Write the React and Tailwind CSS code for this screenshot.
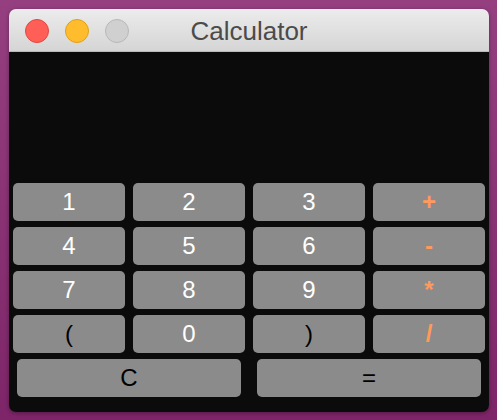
export default function App() {
  const rows = [
    [["1", "w"], ["2", "w"], ["3", "w"], ["+", "o"]],
    [["4", "w"], ["5", "w"], ["6", "w"], ["-", "o"]],
    [["7", "w"], ["8", "w"], ["9", "w"], ["*", "o"]],
    [["(", "b"], ["0", "w"], [")", "b"], ["/", "o"]],
  ];
  const color = { w: "text-white", o: "text-[#ff9a5c] font-semibold text-[23px]", b: "text-black" };
  return (
    <div
      className="w-[497px] h-[420px] bg-gradient-to-b from-[#953f81] to-[#7d2568] pt-[9px] pl-[9px]"
      style={{ fontFamily: '"Liberation Sans", Arial, sans-serif' }}
    >
      <div className="w-[480px] h-[403px] rounded-[7px] overflow-hidden flex flex-col shadow-[0_1px_4px_rgba(0,0,0,0.35)]">
        <div className="h-[43px] shrink-0 bg-gradient-to-b from-[#ececec] to-[#d5d5d5] border-b border-[#b9b9b9] flex items-center relative">
          <div className="flex items-center gap-[16px] pl-[16px] pt-[2px]">
            <div className="w-[24px] h-[24px] rounded-full bg-[#ff5f57] border border-[#e2463f]" />
            <div className="w-[24px] h-[24px] rounded-full bg-[#ffbd2e] border border-[#e1a116]" />
            <div className="w-[24px] h-[24px] rounded-full bg-[#d0d0d0] border border-[#b8b8b8]" />
          </div>
          <div className="absolute inset-0 flex items-center justify-center text-[26px] text-[#4b4b4b] pt-[2px]">
            Calculator
          </div>
        </div>
        <div className="flex-1 bg-[#0b0b0b] flex flex-col">
          <div className="h-[131px]" />
          <div className="px-[4px] flex flex-col gap-[6px]">
            {rows.map((r, i) => (
              <div key={i} className="grid grid-cols-4 gap-[8px]">
                {r.map(([t, c]) => (
                  <div
                    key={t}
                    className={`h-[38px] rounded-[5px] bg-[#8b8b8b] flex items-center justify-center text-[24px] ${color[c]}`}
                  >
                    {t}
                  </div>
                ))}
              </div>
            ))}
            <div className="grid grid-cols-2 gap-[16px] px-[4px]">
              <div className="h-[38px] rounded-[5px] bg-[#8b8b8b] flex items-center justify-center text-[24px] text-black">C</div>
              <div className="h-[38px] rounded-[5px] bg-[#8b8b8b] flex items-center justify-center text-[24px] text-black">=</div>
            </div>
          </div>
        </div>
      </div>
    </div>
  );
}
